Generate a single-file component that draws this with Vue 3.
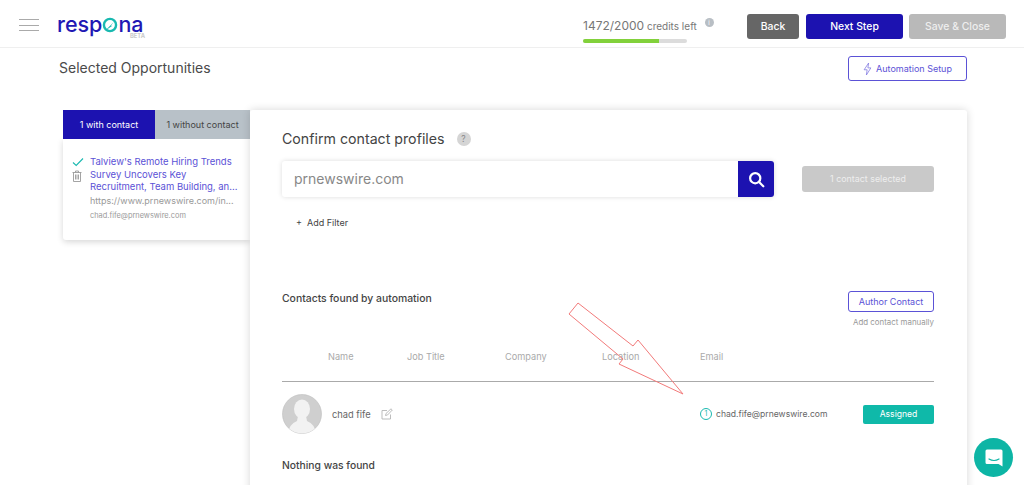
<script setup>
const columns = ['Name', 'Job Title', 'Company', 'Location', 'Email']
</script>

<template>
  <div class="page">
    <header class="topbar">
      <div class="menu"><i></i><i></i><i></i></div>
      <div class="logo">
        <span class="word">resp<svg class="logo-o" viewBox="0 0 20 20" width="16" height="16"><circle cx="10" cy="10" r="7.6" fill="none" stroke="#19b9b0" stroke-width="3"/><path d="M6 15 L15 6 L11 11 L13 11 L7 15Z" fill="#19b9b0"/></svg>na</span>
        <span class="beta">BETA</span>
      </div>
      <div class="credits">
        <div class="credit-text"><b>1472/2000</b> credits left <span class="dot">i</span></div>
        <div class="bar"><div class="fill"></div></div>
      </div>
      <button class="btn back">Back</button>
      <button class="btn next">Next Step</button>
      <button class="btn save">Save &amp; Close</button>
    </header>

    <div class="title-row">
      <h1>Selected Opportunities</h1>
      <button class="setup">
        <svg viewBox="0 0 12 18" width="9" height="14" fill="none" stroke="#7d76e0" stroke-width="1" stroke-linejoin="round"><path d="M7.5 1 L1.5 10 H5.5 L4.5 17 L10.5 7.5 H6.5Z"/></svg>
        Automation Setup
      </button>
    </div>

    <main class="content">
      <aside class="side">
        <div class="tabs">
          <div class="tab on">1 with contact</div>
          <div class="tab off">1 without contact</div>
        </div>
        <div class="opp">
          <div class="opp-icons">
            <svg viewBox="0 0 12 10" width="12" height="10" fill="none" stroke="#19b9b0" stroke-width="1.1"><path d="M1 5.5 L4.2 8.5 L11 1.5"/></svg>
            <svg viewBox="0 0 10 12" width="10" height="12" fill="none" stroke="#9a9a9a" stroke-width="0.9"><path d="M0.5 2.5 H9.5 M3.5 2.5 V1 H6.5 V2.5 M1.5 2.5 V11.5 H8.5 V2.5 M3.5 4.5 V9.5 M5 4.5 V9.5 M6.5 4.5 V9.5"/></svg>
          </div>
          <div class="opp-text">
            <div class="opp-title">Talview's Remote Hiring Trends<br>Survey Uncovers Key<br>Recruitment, Team Building, an...</div>
            <div class="opp-url">https://www.prnewswire.com/in...</div>
            <div class="opp-mail">chad.fife@prnewswire.com</div>
          </div>
        </div>
      </aside>

      <section class="card">
        <div class="confirm">
          <h2>Confirm contact profiles</h2>
          <span class="help">?</span>
        </div>
        <div class="search-row">
          <div class="search">
            <div class="field">prnewswire.com</div>
            <div class="go">
              <svg viewBox="0 0 20 20" width="17" height="17" fill="none" stroke="#fff" stroke-width="2.6"><circle cx="8.5" cy="8.5" r="6"/><path d="M13 13 L18 18" stroke-linecap="round"/></svg>
            </div>
          </div>
          <div class="selected">1 contact selected</div>
        </div>
        <div class="filter">+&nbsp; Add Filter</div>

        <div class="found-row">
          <div class="found">Contacts found by automation</div>
          <div class="author">
            <button class="author-btn">Author Contact</button>
            <div class="manual">Add contact manually</div>
          </div>
        </div>

        <div class="cols">
          <span v-for="c in columns" :key="c">{{ c }}</span>
        </div>

        <div class="contact">
          <div class="who">
            <svg class="avatar" viewBox="0 0 40 40" width="40" height="40">
              <defs><clipPath id="av"><circle cx="20" cy="20" r="19.5"/></clipPath></defs>
              <circle cx="20" cy="20" r="19.5" fill="#cfcfcf" stroke="#bdbdbd" stroke-width="0.6"/>
              <g clip-path="url(#av)" fill="#f2f2f2">
                <ellipse cx="20" cy="15" rx="8" ry="9.5"/>
                <path d="M16 22 H24 L25 27 Q33 30 34 40 H6 Q7 30 15 27Z"/>
              </g>
            </svg>
            <span class="name">chad fife</span>
            <svg viewBox="0 0 12 12" width="12" height="12" fill="none" stroke="#b5b5b5" stroke-width="0.9"><path d="M9.5 6.5 V11 H1 V2.5 H6"/><path d="M4.5 7.5 L5 5.5 L10 0.8 L11.3 2 L6.5 7Z"/></svg>
          </div>
          <div class="mail">
            <span class="num">1</span>
            <span>chad.fife@prnewswire.com</span>
          </div>
          <div class="assigned">Assigned</div>
        </div>

        <div class="nothing">Nothing was found</div>
      </section>
    </main>

    <svg class="arrow" viewBox="0 0 1024 485" width="1024" height="485" fill="none" stroke="#f27a7a" stroke-width="1">
      <path d="M578 303 L633 346 L638 340 L683 394 L619 364 L623 359 L569 314Z"/>
    </svg>

    <div class="chat">
      <svg viewBox="0 0 20 20" width="20" height="20"><path d="M3 1.5 H17 Q18.5 1.5 18.5 3 V18.5 L14.5 16 H3 Q1.5 16 1.5 14.5 V3 Q1.5 1.5 3 1.5Z" fill="#fff"/><path d="M5 11 Q10 14 15 11" fill="none" stroke="#0db5a5" stroke-width="1.2" stroke-linecap="round"/></svg>
    </div>
  </div>
</template>

<style>
html, body { margin: 0; background: #fff; }
</style>

<style scoped>
.page {
  position: relative;
  width: 1024px;
  height: 485px;
  overflow: hidden;
  font-family: Inter, "Liberation Sans", sans-serif;
  color: #444;
  background: #fff;
}
.topbar {
  display: flex;
  align-items: flex-start;
  height: 47px;
  border-bottom: 1px solid #efefef;
  box-sizing: content-box;
}
.menu { margin: 19px 0 0 19px; width: 20px; display: flex; flex-direction: column; gap: 4.5px; }
.menu i { display: block; height: 1px; background: #aaa; }
.logo { position: relative; margin: 9px 0 0 18px; width: 88px; height: 30px; }
.word { display: inline-flex; align-items: center; margin-top: 6px; font-size: 21.5px; line-height: 18px; font-weight: 500; color: #2118b4; vertical-align: top; }
.logo-o { margin: 2px 0 0 0; }
.beta { position: absolute; right: 0; top: 24px; font-size: 5.8px; line-height: 6px; font-weight: 700; color: #c9c9c9; }
.credits { margin: 17px 0 0 438px; width: 150px; }
.credit-text { font-size: 10px; line-height: 17px; color: #777; white-space: nowrap; }
.credit-text b { font-size: 12px; font-weight: 400; }
.dot { display: inline-block; width: 9px; height: 9px; margin-left: 5px; border-radius: 50%; background: #b8bec4; color: #fff; font-size: 6px; line-height: 9px; text-align: center; vertical-align: 5px; }
.bar { margin-top: 4px; width: 104px; height: 4px; background: #dcdcdc; border-radius: 2px; overflow: hidden; }
.fill { width: 76px; height: 100%; background: #82d13b; }
.btn {
  margin-top: 14px;
  height: 25px;
  border: 0;
  border-radius: 3px;
  font-family: inherit;
  font-size: 10.4px;
  font-weight: 500;
  color: #fff;
  padding: 0;
}
.back { width: 52px; margin-left: 14px; background: #666; }
.next { width: 97px; margin-left: 7px; background: #1c12b0; }
.save { width: 97px; margin-left: 6px; background: #b9b9b9; color: #eee; }

.title-row { display: flex; justify-content: space-between; align-items: flex-start; padding: 8px 57px 0 59px; height: 54px; box-sizing: content-box; }
h1 { margin: 2px 0 0; font-size: 14px; line-height: 20px; font-weight: 400; color: #4a4a4a; }
.setup {
  display: flex; align-items: center; justify-content: center; gap: 4px;
  width: 119px; height: 25px; padding: 0;
  background: #fff; border: 1px solid #5b52d6; border-radius: 3px;
  font-family: inherit; font-size: 9px; color: #5b52d6;
}

.content { display: flex; padding-left: 63px; }
.side { width: 187px; flex: none; }
.tabs { display: flex; height: 29px; }
.tab { display: flex; align-items: center; justify-content: center; padding-bottom: 1px; box-sizing: border-box; font-size: 9px; }
.on { width: 92px; background: #1c12b0; color: #fff; }
.off { width: 95px; background: #b8c1c8; color: #444; }
.opp {
  display: flex; height: 101px; box-sizing: border-box;
  padding: 18px 8px 0 9px; gap: 6px;
  background: #fff;
  box-shadow: 0 2px 6px rgba(0,0,0,.16);
  border-radius: 0 0 0 3px;
}
.opp-icons { display: flex; flex-direction: column; gap: 3px; width: 12px; flex: none; }
.opp-text { min-width: 0; flex: 1; margin-top: -1px; }
.opp-title { font-size: 9.5px; line-height: 12.5px; color: #5b52d6; white-space: nowrap; }
.opp-url { font-size: 9px; line-height: 14px; color: #999; white-space: nowrap; }
.opp-mail { margin-top: 1.5px; font-size: 7.4px; line-height: 14px; color: #999; white-space: nowrap; }

.card {
  width: 717px; height: 420px; flex: none; box-sizing: border-box;
  padding: 19px 33px 0 32px;
  background: #fff;
  box-shadow: 0 0 8px rgba(0,0,0,.16);
  border-radius: 3px;
}
.confirm { display: flex; align-items: center; height: 20px; gap: 12px; }
h2 { margin: 0; font-size: 14.2px; line-height: 20px; font-weight: 400; color: #444; }
.help { width: 14px; height: 14px; border-radius: 50%; background: #d5d5d5; color: #888; font-size: 8.5px; line-height: 14px; text-align: center; }
.search-row { display: flex; align-items: center; margin-top: 12px; height: 36px; }
.search {
  display: flex; width: 492px; height: 36px; flex: none;
  border-radius: 3px; box-shadow: 0 0 5px rgba(0,0,0,.14); overflow: hidden;
}
.field { flex: 1; padding-left: 12px; font-size: 14px; line-height: 36px; color: #888; }
.go { width: 36px; background: #1c12b0; display: flex; align-items: center; justify-content: center; }
.selected {
  margin-left: 28px; width: 132px; height: 26px;
  background: #c9c9c9; border-radius: 3px; color: #eee;
  font-size: 8.9px; line-height: 26px; text-align: center;
}
.filter { margin: 18px 0 0 14px; font-size: 9px; line-height: 16px; color: #444; }

.found-row { display: flex; justify-content: space-between; align-items: flex-start; margin-top: 60px; height: 44px; }
.found { font-size: 10.4px; line-height: 16px; font-weight: 500; color: #444; }
.author { display: flex; flex-direction: column; align-items: flex-end; }
.author-btn {
  width: 86px; height: 21px; padding: 0; background: #fff;
  border: 1px solid #5b52d6; border-radius: 3px;
  font-family: inherit; font-size: 9px; color: #5b52d6;
}
.manual { margin-top: 4px; font-size: 7.9px; line-height: 12px; color: #999; }

.cols {
  display: grid; grid-template-columns: 79px 98px 97px 98px auto;
  padding-left: 46px; height: 31px; margin-top: 15px;
  border-bottom: 1px solid #aaa;
  font-size: 9.2px; line-height: 14px; color: #aaa;
  box-sizing: content-box;
}
.contact { display: flex; align-items: center; height: 40px; margin-top: 12px; }
.who { display: flex; align-items: center; width: 418px; flex: none; }
.avatar { flex: none; }
.name { margin: 0 38px 0 10px; width: 11px; white-space: nowrap; font-size: 9.3px; color: #666; }
.mail { display: flex; align-items: center; gap: 4px; width: 163px; flex: none; font-size: 8.6px; color: #666; white-space: nowrap; }
.num { width: 10px; height: 10px; border: 1px solid #19b9b0; border-radius: 50%; font-size: 7px; line-height: 10px; text-align: center; color: #19b9b0; flex: none; }
.assigned { width: 71px; height: 19px; background: #0fb9a9; color: #fff; border-radius: 2px; font-size: 8.6px; line-height: 19px; text-align: center; }
.nothing { margin-top: 23px; font-size: 10.3px; line-height: 16px; font-weight: 500; color: #444; }

.arrow { position: absolute; left: 0; top: 0; pointer-events: none; }
.chat {
  position: absolute; left: 974px; top: 438px;
  width: 39px; height: 39px; border-radius: 50%; background: #0db5a5;
  display: flex; align-items: center; justify-content: center;
}
</style>
